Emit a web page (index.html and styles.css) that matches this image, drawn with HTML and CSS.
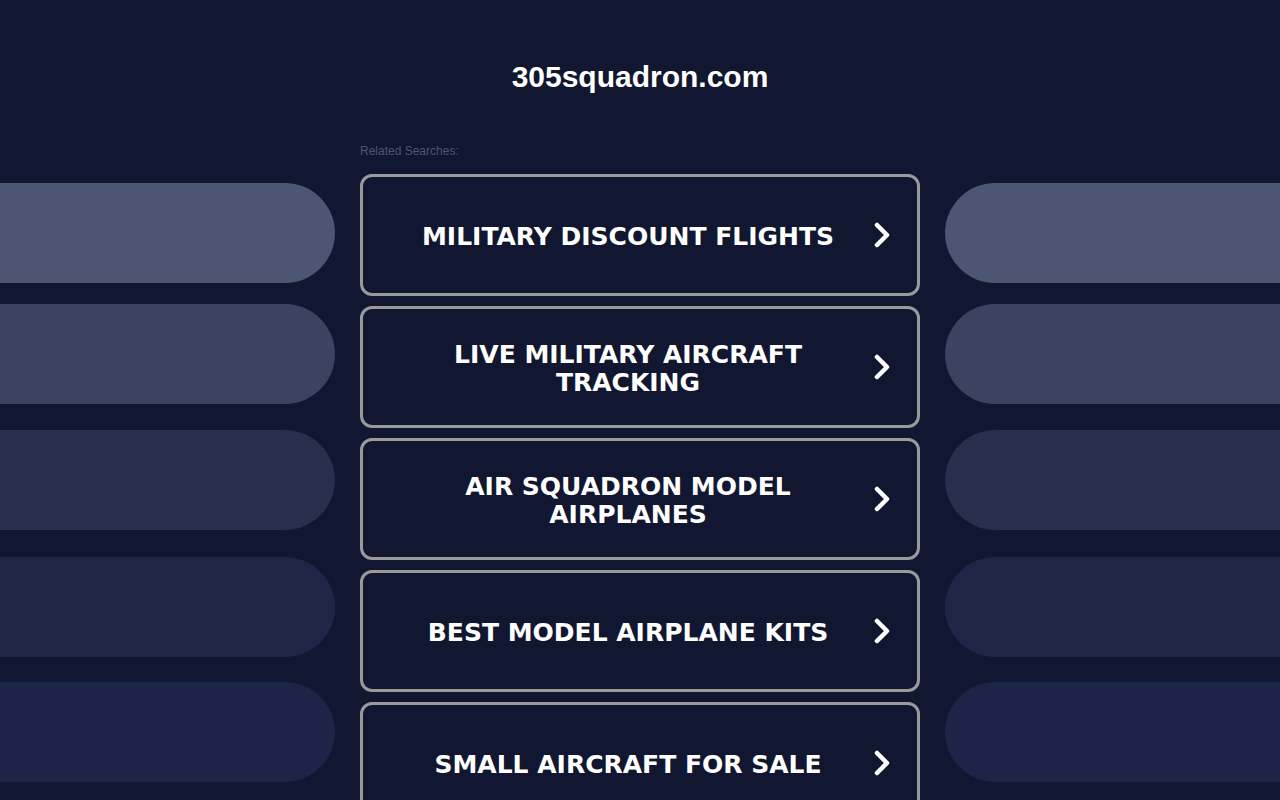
FILE: index.html
```html
<!DOCTYPE html>
<html lang="en">
<head>
    <meta charset="UTF-8">
    <meta name="viewport" content="width=device-width, initial-scale=1.0">
    <title>305squadron.com</title>
    <link rel="stylesheet" href="styles.css">
</head>
<body>
    <header class="top">
        <h1>305squadron.com</h1>
    </header>

    <main class="layout">
        <div class="side side-left">
            <div class="pill pill-1"></div>
            <div class="pill pill-2"></div>
            <div class="pill pill-3"></div>
            <div class="pill pill-4"></div>
            <div class="pill pill-5"></div>
        </div>

        <section class="related">
            <p class="related-label">Related Searches:</p>
            <a class="search-card" href="#">
                <span class="search-text">MILITARY DISCOUNT FLIGHTS</span>
                <svg class="chevron" viewBox="0 0 18 26" width="18" height="26"><polyline points="4,3 14,13 4,23"/></svg>
            </a>
            <a class="search-card" href="#">
                <span class="search-text">LIVE MILITARY AIRCRAFT TRACKING</span>
                <svg class="chevron" viewBox="0 0 18 26" width="18" height="26"><polyline points="4,3 14,13 4,23"/></svg>
            </a>
            <a class="search-card" href="#">
                <span class="search-text">AIR SQUADRON MODEL AIRPLANES</span>
                <svg class="chevron" viewBox="0 0 18 26" width="18" height="26"><polyline points="4,3 14,13 4,23"/></svg>
            </a>
            <a class="search-card" href="#">
                <span class="search-text">BEST MODEL AIRPLANE KITS</span>
                <svg class="chevron" viewBox="0 0 18 26" width="18" height="26"><polyline points="4,3 14,13 4,23"/></svg>
            </a>
            <a class="search-card" href="#">
                <span class="search-text">SMALL AIRCRAFT FOR SALE</span>
                <svg class="chevron" viewBox="0 0 18 26" width="18" height="26"><polyline points="4,3 14,13 4,23"/></svg>
            </a>
        </section>

        <div class="side side-right">
            <div class="pill pill-1"></div>
            <div class="pill pill-2"></div>
            <div class="pill pill-3"></div>
            <div class="pill pill-4"></div>
            <div class="pill pill-5"></div>
        </div>
    </main>
</body>
</html>
```

FILE: styles.css
```css
body {
    margin: 0;
    background-color: #111730;
    font-family: "Liberation Sans", Arial, sans-serif;
    height: 100vh;
    overflow: hidden;
}
.top {
    height: 141px;
    text-align: center;
}
.top h1 {
    margin: 0;
    padding-top: 60px;
    font-size: 30px;
    line-height: 34px;
    font-weight: bold;
    color: #fff;
}
.layout {
    display: grid;
    grid-template-columns: 335px 560px 335px;
    column-gap: 25px;
}

/* decorative bars at both sides */
.side {
    display: flex;
    flex-direction: column;
    gap: 25px;
    padding-top: 42px;
}
.pill {
    height: 100px;
}
.side-left .pill {
    border-radius: 0 50px 50px 0;
}
.side-right .pill {
    border-radius: 50px 0 0 50px;
}
.pill-1 {
    background-color: #4c5571;
    margin-bottom: -4px;
}
.pill-2 {
    background-color: #3a4360;
    margin-bottom: 1px;
}
.pill-3 {
    background-color: #272f4d;
    margin-bottom: 2px;
}
.pill-4 { background-color: #1e2646; }
.pill-5 { background-color: #1c2548; }

.related-label {
    margin: 0 0 13px;
    line-height: 20px;
    font-size: 12px;
    color: #4b5677;
}
.search-card {
    display: flex;
    align-items: center;
    gap: 8px;
    height: 122px;
    box-sizing: border-box;
    margin-bottom: 10px;
    padding: 0 26px 0 24px;
    border: 3px solid #9a9a9a;
    border-radius: 12px;
    text-decoration: none;
    color: #fff;
}
.search-text {
    flex: 1;
    text-align: center;
    font-family: "DejaVu Sans", Verdana, sans-serif;
    font-weight: bold;
    font-size: 25px;
    line-height: 28px;
    padding: 3px 20px 0 24px;
}
.chevron {
    flex: none;
    fill: none;
    stroke: #fff;
    stroke-width: 4.5;
    stroke-linecap: round;
    stroke-linejoin: round;
}
```
